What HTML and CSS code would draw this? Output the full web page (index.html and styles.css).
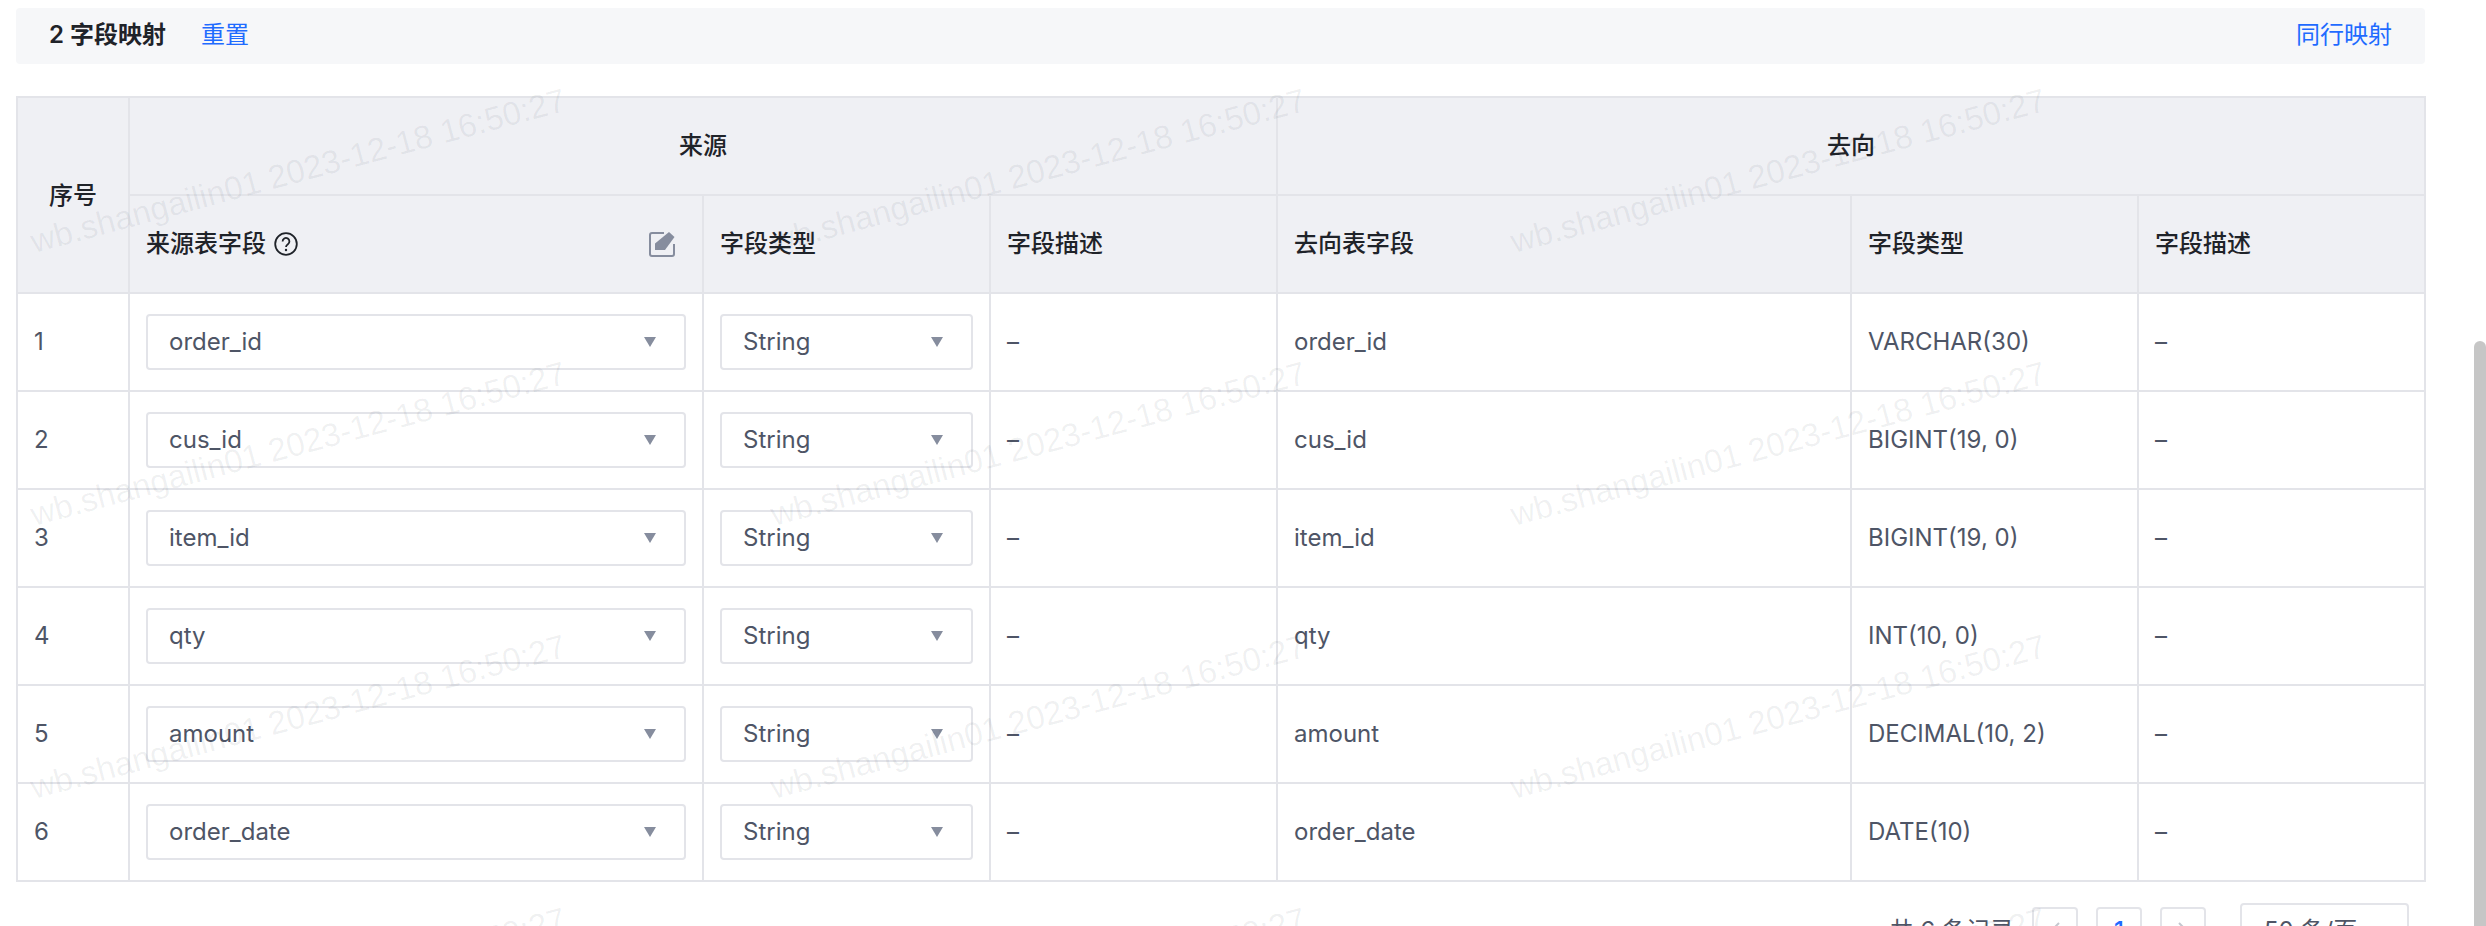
FILE: index.html
```html
<!DOCTYPE html>
<html lang="zh-CN">
<head>
<meta charset="utf-8">
<title>字段映射</title>
<link rel="stylesheet" href="styles.css">
</head>
<body>
<div class="page">
  <main class="content">
    <div class="bar">
      <div class="bar-left"><span class="bar-title">2 字段映射</span><a class="link">重置</a></div>
      <a class="link">同行映射</a>
    </div>
    <table class="map">
      <colgroup>
        <col class="c-idx"><col class="c-wide"><col class="c-nar"><col class="c-nar"><col class="c-wide"><col class="c-nar"><col class="c-nar">
      </colgroup>
      <thead>
        <tr><th rowspan="2" class="center idx-head">序号</th><th colspan="3" class="center">来源</th><th colspan="3" class="center">去向</th></tr>
        <tr>
          <th>
            <div class="th-row">
              <span class="th-label">来源表字段
                <svg class="help" viewBox="0 0 24 24"><circle cx="12" cy="12" r="10.8" fill="none" stroke="#1f2329" stroke-width="1.8"/><path d="M8.6 9.4a3.4 3.4 0 1 1 5.3 2.8c-1.2.8-1.9 1.4-1.9 2.7" fill="none" stroke="#1f2329" stroke-width="1.8"/><circle cx="12" cy="18" r="1.2" fill="#1f2329"/></svg>
              </span>
              <svg class="edit" viewBox="0 0 26 26"><path d="M15 2H3a2 2 0 0 0-2 2v19a2 2 0 0 0 2 2h20a2 2 0 0 0 2-2V13" fill="none" stroke="#868d9e" stroke-width="2"/><path d="M20 1l5.5 5L16 19H6v-6.5z" fill="#868d9e"/></svg>
            </div>
          </th>
          <th>字段类型</th><th>字段描述</th><th>去向表字段</th><th>字段类型</th><th>字段描述</th>
        </tr>
      </thead>
      <tbody>
        <tr><td>1</td><td><div class="sel"><span>order_id</span><i class="caret"></i></div></td><td><div class="sel"><span>String</span><i class="caret"></i></div></td><td>–</td><td>order_id</td><td>VARCHAR(30)</td><td>–</td></tr>
        <tr><td>2</td><td><div class="sel"><span>cus_id</span><i class="caret"></i></div></td><td><div class="sel"><span>String</span><i class="caret"></i></div></td><td>–</td><td>cus_id</td><td>BIGINT(19, 0)</td><td>–</td></tr>
        <tr><td>3</td><td><div class="sel"><span>item_id</span><i class="caret"></i></div></td><td><div class="sel"><span>String</span><i class="caret"></i></div></td><td>–</td><td>item_id</td><td>BIGINT(19, 0)</td><td>–</td></tr>
        <tr><td>4</td><td><div class="sel"><span>qty</span><i class="caret"></i></div></td><td><div class="sel"><span>String</span><i class="caret"></i></div></td><td>–</td><td>qty</td><td>INT(10, 0)</td><td>–</td></tr>
        <tr><td>5</td><td><div class="sel"><span>amount</span><i class="caret"></i></div></td><td><div class="sel"><span>String</span><i class="caret"></i></div></td><td>–</td><td>amount</td><td>DECIMAL(10, 2)</td><td>–</td></tr>
        <tr><td>6</td><td><div class="sel"><span>order_date</span><i class="caret"></i></div></td><td><div class="sel"><span>String</span><i class="caret"></i></div></td><td>–</td><td>order_date</td><td>DATE(10)</td><td>–</td></tr>
      </tbody>
    </table>
    <div class="pager">
      <span class="total">共 6 条记录</span>
      <span class="pg"><svg class="chev" viewBox="0 0 12 20"><path d="M10 2L2 10l8 8" fill="none" stroke="#c4c7cf" stroke-width="2"/></svg></span>
      <span class="pg pg-on">1</span>
      <span class="pg"><svg class="chev" viewBox="0 0 12 20"><path d="M2 2l8 8-8 8" fill="none" stroke="#c4c7cf" stroke-width="2"/></svg></span>
      <span class="size">50 条/页</span>
    </div>
  </main>
  <div class="scroll-thumb"></div>
</div>
<div class="wm">
  <span>wb.shangailin01 2023-12-18 16:50:27</span><span>wb.shangailin01 2023-12-18 16:50:27</span><span>wb.shangailin01 2023-12-18 16:50:27</span>
  <span>wb.shangailin01 2023-12-18 16:50:27</span><span>wb.shangailin01 2023-12-18 16:50:27</span><span>wb.shangailin01 2023-12-18 16:50:27</span>
  <span>wb.shangailin01 2023-12-18 16:50:27</span><span>wb.shangailin01 2023-12-18 16:50:27</span><span>wb.shangailin01 2023-12-18 16:50:27</span>
  <span>wb.shangailin01 2023-12-18 16:50:27</span><span>wb.shangailin01 2023-12-18 16:50:27</span><span>wb.shangailin01 2023-12-18 16:50:27</span>
</div>
</body>
</html>
```
FILE: styles.css
```css
html, body { margin: 0; height: 926px; overflow: hidden; background: #fff; }
body { position: relative; font-family: "Inter", "Noto Sans CJK SC", sans-serif; font-size: 24px; line-height: 32px; color: #4e5566; }
.page { display: flex; height: 926px; }
.content { width: 2474px; flex: none; padding: 8px 0 0 16px; box-sizing: border-box; }
.scroll-thumb { width: 12px; margin-top: 341px; background: #c6c6c6; border-radius: 6px 6px 0 0; }

.bar { width: 2409px; height: 56px; box-sizing: border-box; padding: 0 33px 2px; background: #f6f7f9; border-radius: 4px; display: flex; align-items: center; justify-content: space-between; }
.bar-left { display: flex; align-items: center; gap: 35px; }
.bar-title { font-weight: 600; color: #1f2329; }
.link { color: #1f6bff; }

.map { width: 2409px; margin-top: 32px; table-layout: fixed; border-collapse: collapse; }
.c-idx { width: 112px; }
.c-wide { width: 574px; }
.c-nar { width: 287px; }
.map th, .map td { border: 2px solid #e3e4e9; padding: 0 16px; height: 98px; box-sizing: border-box; text-align: left; }
.map th { background: #eff0f4; color: #1f2329; font-weight: 500; }
.map th.center { text-align: center; }
.map th.idx-head { padding-top: 2px; }
.th-row { display: flex; align-items: center; justify-content: space-between; padding-right: 11px; }
.th-label { display: flex; align-items: center; gap: 8px; }
.help { width: 24px; height: 24px; }
.edit { width: 26px; height: 26px; }

.sel { height: 56px; box-sizing: border-box; border: 2px solid #e3e4e9; border-radius: 4px; padding: 0 28px 0 21px; display: flex; align-items: center; justify-content: space-between; }
.caret { width: 0; height: 0; border-left: 6px solid transparent; border-right: 6px solid transparent; border-top: 10px solid #868d9e; }

.pager { width: 2393px; margin-top: 21px; display: flex; align-items: center; justify-content: flex-end; gap: 18px; color: #4e5566; }
.pg { width: 46px; height: 48px; box-sizing: border-box; border: 2px solid #e3e4e9; border-radius: 4px; display: flex; align-items: center; justify-content: center; }
.pg-on { color: #1f6bff; font-weight: 500; }
.chev { width: 12px; height: 20px; }
.size { width: 169px; height: 56px; margin-left: 16px; box-sizing: border-box; border: 2px solid #e3e4e9; border-radius: 4px; padding-left: 22px; display: flex; align-items: center; }

.wm { position: absolute; left: -72px; top: 34px; display: grid; grid-template-columns: repeat(3, 740px); grid-auto-rows: 273px; place-items: center; pointer-events: none; font-family: "Liberation Sans", sans-serif; font-size: 33px; color: rgba(30, 40, 60, 0.065); white-space: nowrap; }
.wm span { transform: rotate(-15deg); }
```
